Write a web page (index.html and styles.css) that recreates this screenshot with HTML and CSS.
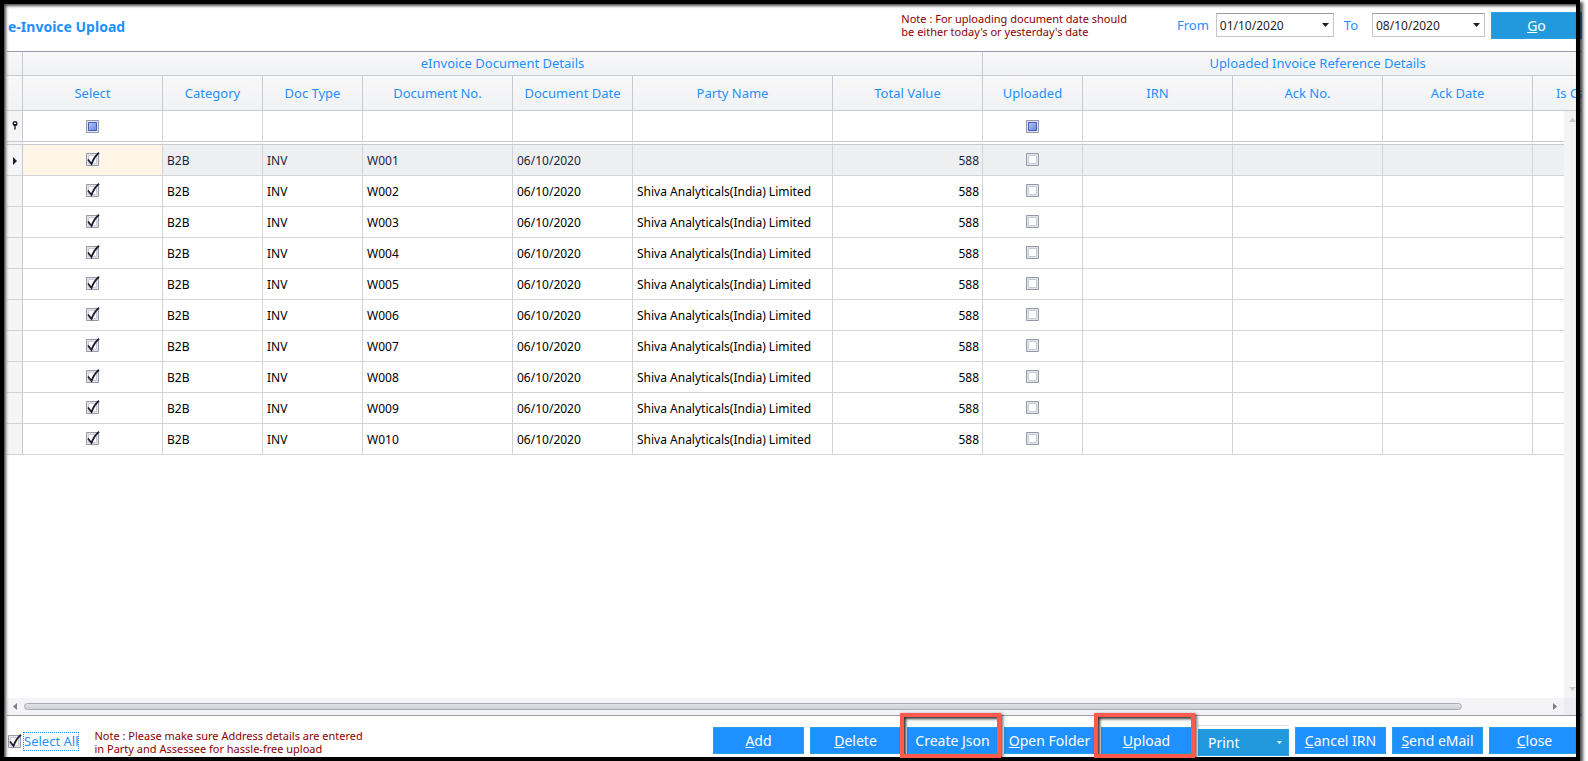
FILE: index.html
```html
<!DOCTYPE html>
<html lang="en">
<head>
  <meta charset="UTF-8">
  <meta name="viewport" content="width=device-width, initial-scale=1.0">
  <title>e-Invoice Upload</title>
  <link rel="stylesheet" href="styles.css">
</head>
<body>
  <div class="window">
    <header class="top-bar">
      <h1>e-Invoice Upload</h1>
      <p class="note">Note : For uploading document date should<br>be either today's or yesterday's date</p>
      <form class="date-filter">
        <label for="from-date">From</label>
        <select id="from-date" class="from-date">
          <option>01/10/2020</option>
        </select>
        <label for="to-date">To</label>
        <select id="to-date">
          <option>08/10/2020</option>
        </select>
        <button type="button" class="button-go"><u>G</u>o</button>
      </form>
    </header>

    <main class="grid">
      <div class="grid-view">
        <table>
          <colgroup>
            <col class="col-marker">
            <col class="col-select">
            <col class="col-small">
            <col class="col-small">
            <col class="col-medium">
            <col class="col-date">
            <col class="col-party">
            <col class="col-medium">
            <col class="col-small">
            <col class="col-medium">
            <col class="col-medium">
            <col class="col-medium">
            <col class="col-date">
          </colgroup>
          <thead>
            <tr class="row-group">
              <th></th>
              <th colspan="7">eInvoice Document Details</th>
              <th colspan="5">Uploaded Invoice Reference Details</th>
            </tr>
            <tr class="row-head">
              <th></th>
              <th>Select</th>
              <th>Category</th>
              <th>Doc Type</th>
              <th>Document No.</th>
              <th>Document Date</th>
              <th>Party Name</th>
              <th>Total Value</th>
              <th>Uploaded</th>
              <th>IRN</th>
              <th>Ack No.</th>
              <th>Ack Date</th>
              <th>Is Cancelled</th>
            </tr>
            <tr class="row-filter">
              <td class="marker">
                <svg width="6" height="9" viewBox="0 0 6 9"><circle cx="3" cy="2.5" r="1.8" fill="none" stroke="#1e1e2d" stroke-width="1.4"/><path d="M0.5 3h5L3.7 5.2V8.500H2.300V5.200z" fill="#1e1e2d"/></svg>
              </td>
              <td class="center"><input type="checkbox" class="filter-check" aria-label="Filter selected"></td>
              <td></td>
              <td></td>
              <td></td>
              <td></td>
              <td></td>
              <td></td>
              <td class="center"><input type="checkbox" class="filter-check" aria-label="Filter uploaded"></td>
              <td></td>
              <td></td>
              <td></td>
              <td></td>
            </tr>
          </thead>
          <tbody id="invoices"></tbody>
        </table>
        <div class="scroll-v">
          <svg width="7" height="4" viewBox="0 0 7 4"><path d="M0 4 3.500 0 7 4z" fill="#c8c9cf"/></svg>
          <svg width="7" height="4" viewBox="0 0 7 4"><path d="M0 0h7L3.500 4z" fill="#c8c9cf"/></svg>
        </div>
      </div>
      <div class="scroll-h">
        <svg width="4" height="7" viewBox="0 0 4 7"><path d="M4 0v7L0 3.500z" fill="#7b7d8c"/></svg>
        <div class="track"><div class="thumb"></div></div>
        <svg width="4" height="7" viewBox="0 0 4 7"><path d="M0 0v7L4 3.500z" fill="#7b7d8c"/></svg>
        <div class="corner"></div>
      </div>
    </main>

    <footer class="bottom-bar">
      <input type="checkbox" id="select-all" checked>
      <label for="select-all" class="select-all">Select All</label>
      <p class="note">Note : Please make sure Address details are entered<br>in Party and Assessee for hassle-free upload</p>
      <div class="actions">
        <button type="button"><u>A</u>dd</button>
        <button type="button"><u>D</u>elete</button>
        <button type="button" class="marked">Create <u>J</u>son</button>
        <button type="button"><u>O</u>pen Folder</button>
        <button type="button" class="marked"><u>U</u>pload</button>
        <div class="print-slot">
          <button type="button" class="button-print">Print
            <svg width="5" height="3" viewBox="0 0 5 3"><path d="M0 0h5L2.500 3z" fill="#fff"/></svg>
          </button>
        </div>
        <button type="button"><u>C</u>ancel IRN</button>
        <button type="button"><u>S</u>end eMail</button>
        <button type="button"><u>C</u>lose</button>
      </div>
    </footer>
  </div>

  <script>
    const party = 'Shiva Analyticals(India) Limited';
    const invoices = [];
    for (let i = 1; i <= 10; i++) {
      invoices.push({
        number: `W${String(i).padStart(3, '0')}`,
        date: '06/10/2020',
        party: i === 1 ? '' : party,
        total: 588
      });
    }

    // The first row is the current one
    const arrow = '<svg width="4" height="8" viewBox="0 0 4 8"><path d="M0 0v8L4 4z" fill="#1e1e2d"/></svg>';

    document.getElementById('invoices').innerHTML = invoices.map((invoice, index) => `
      <tr class="${index === 0 ? 'current' : ''}">
        <td class="marker">${index === 0 ? arrow : ''}</td>
        <td class="center"><input type="checkbox" aria-label="Select ${invoice.number}" checked></td>
        <td>B2B</td>
        <td>INV</td>
        <td>${invoice.number}</td>
        <td>${invoice.date}</td>
        <td>${invoice.party}</td>
        <td class="amount">${invoice.total}</td>
        <td class="center"><input type="checkbox" aria-label="Uploaded ${invoice.number}"></td>
        <td></td>
        <td></td>
        <td></td>
        <td></td>
      </tr>
    `).join('');
  </script>
</body>
</html>
```
FILE: styles.css
```css
* {
  box-sizing: border-box;
}

body {
  margin: 0;
  background-color: #fff;
  font-family: "Noto Sans", "Open Sans", sans-serif;
  font-size: 12px;
  color: #000;
  overflow: hidden;
}

/* Window and its black frame */
.window {
  position: relative;
  display: flex;
  flex-direction: column;
  height: 100vh;
  margin-right: 6px;
  padding: 5px 0 4px 7px;
}

.window::after {
  content: "";
  position: absolute;
  inset: 0 2px 0 0;
  border: 4px solid #000;
  box-shadow: 3px 2px 3px rgba(0, 0, 0, 0.7), inset 2px 2px 3px rgba(0, 0, 0, 0.7);
  pointer-events: none;
}

/* Top bar */
.top-bar {
  display: flex;
  align-items: center;
  height: 46px;
  padding-bottom: 6px;
  color: #1e90ff;
}

h1 {
  flex: 1;
  margin: 0;
  padding: 2px 0 0 1px;
  font-size: 14px;
  font-weight: bold;
}

.note {
  margin: 0;
  font-size: 11px;
  line-height: 13px;
  color: #8b0000;
}

.date-filter {
  display: flex;
  align-items: center;
  margin-left: 50px;
  font-size: 13px;
}

select {
  appearance: none;
  width: 113px;
  height: 24px;
  margin: 0 6px 0 14px;
  padding: 0 3px;
  border: 1px solid #c4c5cd;
  border-top-color: #9a9ba8;
  border-radius: 0;
  background: #fff url("data:image/svg+xml,%3Csvg xmlns='http://www.w3.org/2000/svg' width='7' height='4'%3E%3Cpath d='M0 0h7L3.500 4z' fill='%231e1e2d'/%3E%3C/svg%3E") no-repeat right 4px center;
  font-family: inherit;
  font-size: 12px;
  color: #1e1e2d;
}

.from-date {
  width: 118px;
  margin: 0 10px 0 7px;
}

/* Buttons */
button {
  width: 91px;
  height: 27px;
  padding: 0;
  border: 1px solid #2e9fe0;
  background-color: #1e90ff;
  font-family: inherit;
  font-size: 14px;
  color: #fff;
  white-space: nowrap;
}

.button-go,
.button-print {
  background-color: #2299dd;
}

/* Grid */
.grid {
  display: flex;
  flex: 1;
  flex-direction: column;
  min-height: 0;
  border: 1px solid #9a9ba8;
  border-width: 1px 0;
}

.grid-view {
  position: relative;
  flex: 1;
  min-height: 0;
  overflow: hidden;
}

table {
  width: 1646px;
  table-layout: fixed;
  border-collapse: separate;
  border-spacing: 0;
}

.col-marker {
  width: 16px;
}

.col-select {
  width: 140px;
}

.col-small {
  width: 100px;
}

.col-date {
  width: 120px;
}

.col-medium {
  width: 150px;
}

.col-party {
  width: 200px;
}

th,
td {
  height: 31px;
  padding: 0 3px 0 4px;
  border: 1px solid #d3d4da;
  border-width: 0 1px 1px 0;
  text-align: left;
  white-space: nowrap;
}

th {
  padding: 0;
  border-color: #c8c9d1;
  background: linear-gradient(#f8f8f9, #f1f2f4);
  font-size: 13px;
  font-weight: normal;
  color: #1e90ff;
  text-align: center;
}

.row-group th {
  height: 24px;
  padding-bottom: 2px;
}

.row-head th {
  height: 35px;
}

/* Double rule between the filter row and the data */
.row-filter td {
  height: 34px;
  padding-bottom: 1px;
  border-bottom: 4px double #c8c9d1;
}

.marker,
.row-filter .marker {
  padding-left: 0;
  padding-right: 0;
  background-color: #f4f5f7;
  border-right-color: #c8c9d1;
  text-align: center;
}

.center {
  padding: 0 0 3px;
  text-align: center;
}

.amount {
  text-align: right;
}

.current td {
  background-color: #eeeff1;
  color: #1e1e3c;
}

.current .marker {
  background-color: #f4f5f7;
}

.current .marker + td {
  background-color: #fef5e6;
}

/* Check boxes */
input[type="checkbox"] {
  appearance: none;
  display: inline-block;
  width: 15px;
  height: 15px;
  margin: 0;
  vertical-align: middle;
  background: url("data:image/svg+xml,%3Csvg xmlns='http://www.w3.org/2000/svg' width='15' height='15'%3E%3Cpath d='M1.500 1.500h12v12h-12z' fill='%23e4e5ea' stroke='%23969aa6'/%3E%3Cpath d='M3.500 3.500h8v8h-8z' fill='%23fff' stroke='%23c9ccd4'/%3E%3C/svg%3E");
}

input[type="checkbox"]:checked {
  background-image: url("data:image/svg+xml,%3Csvg xmlns='http://www.w3.org/2000/svg' width='15' height='15'%3E%3Cpath d='M1.500 1.500h12v12h-12z' fill='%23e4e5ea' stroke='%23969aa6'/%3E%3Cpath d='M3.500 3.500h8v8h-8z' fill='%23fff' stroke='%23c9ccd4'/%3E%3Cpath d='M3 7.500l3.500 4.500Q9 5 14 .8' fill='none' stroke='%231e1e32' stroke-width='1.800'/%3E%3C/svg%3E");
}

input.filter-check {
  background-image: url("data:image/svg+xml,%3Csvg xmlns='http://www.w3.org/2000/svg' width='15' height='15'%3E%3ClinearGradient id='g' x2='1' y2='1'%3E%3Cstop stop-color='%23b9c9f5'/%3E%3Cstop offset='1' stop-color='%236585dc'/%3E%3C/linearGradient%3E%3Cpath d='M1.500 1.500h12v12h-12z' fill='%23e4e5ea' stroke='%23969aa6'/%3E%3Cpath d='M3.500 3.500h8v8h-8z' fill='url(%23g)' stroke='%233f5fb8'/%3E%3C/svg%3E");
}

/* Scrollbars */
.scroll-v {
  position: absolute;
  top: 59px;
  right: 0;
  bottom: 0;
  display: flex;
  flex-direction: column;
  justify-content: space-between;
  width: 18px;
  padding: 7px 5px;
  background-color: #f4f4f7;
}

.scroll-h {
  display: flex;
  align-items: center;
  gap: 7px;
  height: 17px;
  padding-left: 6px;
  background-color: #f4f4f7;
}

.track {
  flex: 1;
}

.thumb {
  width: 94.5%;
  height: 7px;
  border: 1px solid #a9abb5;
  border-radius: 4px;
  background: linear-gradient(#e2e3e8, #cfd0d6);
}

.corner {
  width: 18px;
  height: 17px;
  background-color: #ebedf2;
}

/* Bottom bar */
.bottom-bar {
  display: flex;
  align-items: center;
  height: 41px;
  padding-top: 10px;
  padding-right: 2px;
}

.select-all {
  margin: 0 15px 0 1px;
  border: 1px dotted #1e90ff;
  font-size: 13px;
  line-height: 17px;
  color: #1e90ff;
}

.actions {
  display: flex;
  gap: 6px;
  margin-left: auto;
}

/* Red box around the buttons to press */
.marked {
  position: relative;
}

.marked::after {
  content: "";
  position: absolute;
  inset: -15px -4px -5px -8px;
  z-index: 1;
  border: 4px solid #ff5a4b;
  box-shadow: 2px 1px 3px rgba(0, 0, 0, 0.6), inset 2px 2px 3px rgba(0, 0, 0, 0.8);
}

.print-slot {
  height: 31px;
  margin-top: -2px;
  border-top: 1px solid #e1e2e6;
  padding-top: 3px;
}

.button-print {
  display: flex;
  align-items: center;
  justify-content: space-between;
  padding: 0 6px 0 9px;
}
```
